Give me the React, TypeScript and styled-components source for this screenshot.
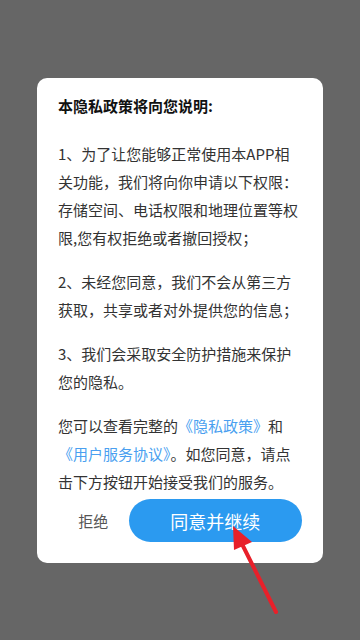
import styled, { createGlobalStyle } from "styled-components";

const GlobalStyle = createGlobalStyle`
  html, body {
    margin: 0;
    padding: 0;
    background: #666666;
  }
  body {
    font-family: "Noto Sans CJK SC", "Noto Sans", sans-serif;
  }
`;

const Screen = styled.div`
  position: relative;
  width: 360px;
  height: 640px;
  background: #666666;
  display: flex;
  flex-direction: column;
  align-items: center;
  padding-top: 78px;
  box-sizing: border-box;
  overflow: hidden;
`;

const Dialog = styled.div`
  width: 286px;
  background: #ffffff;
  border-radius: 10px;
  padding: 14px 21px 21px 21px;
  box-sizing: border-box;
  display: flex;
  flex-direction: column;
`;

const Title = styled.h1`
  margin: 0 0 20px 0;
  font-size: 15px;
  line-height: 28px;
  font-weight: 700;
  color: #111111;
`;

const Paragraph = styled.p<{ $last?: boolean }>`
  margin: 0 0 ${(p) => (p.$last ? "0" : "16px")} 0;
  font-size: 15px;
  line-height: 28px;
  color: #333333;
  word-break: break-all;
`;

const Link = styled.span`
  color: #4a9ff0;
`;

const Actions = styled.div`
  display: flex;
  align-items: center;
  margin-top: 3px;
`;

const RejectButton = styled.button`
  border: none;
  background: none;
  padding: 0;
  width: 71px;
  text-align: center;
  font-family: inherit;
  font-size: 15px;
  color: #555555;
`;

const AgreeButton = styled.button`
  border: none;
  width: 174px;
  height: 43px;
  border-radius: 22px;
  background: #2b9af0;
  color: #ffffff;
  font-family: inherit;
  font-size: 18px;
`;

const Arrow = styled.svg`
  position: absolute;
  left: 222px;
  top: 518px;
`;

export default function App() {
  return (
    <>
      <GlobalStyle />
      <Screen>
        <Dialog>
          <Title>本隐私政策将向您说明:</Title>
          <Paragraph>
            1、为了让您能够正常使用本APP相关功能，我们将向你申请以下权限：存储空间、电话权限和地理位置等权限,您有权拒绝或者撤回授权；
          </Paragraph>
          <Paragraph>2、未经您同意，我们不会从第三方获取，共享或者对外提供您的信息；</Paragraph>
          <Paragraph>3、我们会采取安全防护措施来保护您的隐私。</Paragraph>
          <Paragraph $last>
            您可以查看完整的<Link>《隐私政策》</Link>和<Link>《用户服务协议》</Link>。如您同意，请点击下方按钮开始接受我们的服务。
          </Paragraph>
          <Actions>
            <RejectButton>拒绝</RejectButton>
            <AgreeButton>同意并继续</AgreeButton>
          </Actions>
        </Dialog>
        <Arrow width="70" height="100" viewBox="0 0 70 100">
          <line x1="54" y1="94" x2="18" y2="22" stroke="#e8202a" strokeWidth="4" strokeLinecap="round" />
          <polygon points="11,8 30,24 12,32" fill="#e8202a" />
        </Arrow>
      </Screen>
    </>
  );
}
